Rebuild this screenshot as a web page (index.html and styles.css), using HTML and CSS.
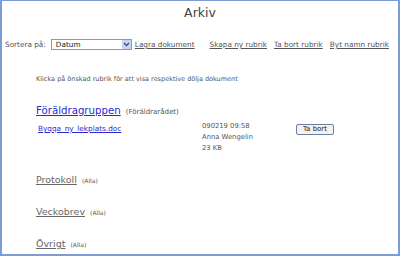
FILE: index.html
```html
<!DOCTYPE html>
<html lang="sv">
<head>
    <meta charset="UTF-8">
    <title>Arkiv</title>
    <link rel="stylesheet" href="styles.css">
</head>
<body>
    <div class="frame">
        <h1 class="title">Arkiv</h1>

        <div class="toolbar">
            <label class="sort-label">Sortera på:</label>
            <div class="select">
                <span>Datum</span>
                <span class="select-btn">
                    <svg width="7" height="5" viewBox="0 0 7 5"><path d="M1 1 L3.5 3.5 L6 1" fill="none" stroke="#3a4f8a" stroke-width="1.4"/></svg>
                </span>
            </div>
            <a href="#" class="action first">Lagra dokument</a>
            <div class="right-actions">
                <a href="#" class="action">Skapa ny rubrik</a>
                <a href="#" class="action">Ta bort rubrik</a>
                <a href="#" class="action">Byt namn rubrik</a>
            </div>
        </div>

        <div class="main">
            <p class="hint">Klicka på önskad rubrik för att visa respektive dölja dokument</p>

            <div class="group open">
                <div class="group-head">
                    <a href="#" class="group-link blue">Föräldragruppen</a>
                    <span class="group-owner">(Föräldrarådet)</span>
                </div>
                <div class="doc-row">
                    <a href="#" class="doc-link">Byqqa_ny_lekplats.doc</a>
                    <div class="doc-meta">
                        <div>090219 09:58</div>
                        <div>Anna Wengelin</div>
                        <div>23 KB</div>
                    </div>
                    <div class="doc-action"><button type="button">Ta bort</button></div>
                </div>
            </div>

            <div class="group first-closed">
                <a href="#" class="group-link">Protokoll</a>
                <span class="group-owner small">(Alla)</span>
            </div>
            <div class="group">
                <a href="#" class="group-link">Veckobrev</a>
                <span class="group-owner small">(Alla)</span>
            </div>
            <div class="group">
                <a href="#" class="group-link">Övrigt</a>
                <span class="group-owner small">(Alla)</span>
            </div>
        </div>
    </div>
</body>
</html>
```

FILE: styles.css
```css
body {
    margin: 0;
    font-family: "DejaVu Sans", Verdana, sans-serif;
    color: #555;
}

.frame {
    height: 256px;
    box-sizing: border-box;
    border: 2px solid #7d9bd4;
    border-top-width: 1px;
    background: #fff;
    overflow: hidden;
}

.title {
    margin: 4px 0 0;
    text-align: center;
    font-size: 12.5px;
    font-weight: normal;
    color: #444;
    line-height: 16px;
}

.toolbar {
    display: flex;
    align-items: center;
    padding: 18px 0 0 3px;
    font-size: 7.3px;
}

.sort-label {
    color: #555;
}

.select {
    display: flex;
    align-items: center;
    justify-content: space-between;
    width: 81px;
    height: 11px;
    margin-left: 5px;
    border: 1px solid #7f9db9;
    box-sizing: border-box;
    padding-left: 4px;
    color: #222;
}

.select-btn {
    display: flex;
    align-items: center;
    justify-content: center;
    width: 9px;
    height: 9px;
    background: #c5d5f5;
}

.action {
    color: #555;
    text-decoration: underline;
}

.action.first {
    margin-left: 3px;
}

.right-actions {
    display: flex;
    gap: 7px;
    margin-left: 15px;
}

.main {
    padding-left: 34px;
}

.hint {
    margin: 25px 0 0;
    font-size: 6.5px;
    color: #555;
}

.group {
    margin-top: 17px;
    line-height: 12px;
}

.group.open {
    margin-top: 20px;
}

.group.first-closed {
    margin-top: 18px;
}

.group-link {
    font-size: 9.5px;
    color: #666;
}

.group-link.blue {
    font-size: 10.2px;
    color: #2a2ad0;
}

.group-owner {
    font-size: 7px;
    color: #555;
}

.group-owner.small {
    font-size: 6px;
}

.doc-row {
    display: flex;
    margin-top: 5px;
    font-size: 6.8px;
}

.doc-link {
    width: 164px;
    margin-left: 2px;
    font-size: 7.3px;
    color: #2a2ad0;
}

.doc-meta {
    width: 94px;
    line-height: 11px;
    margin-top: -2px;
}

.doc-action button {
    font-family: "DejaVu Sans", Verdana, sans-serif;
    font-size: 7px;
    padding: 0 3px;
    height: 11px;
    width: 38px;
    margin-top: -3px;
    border: 1px solid #6a7fa8;
    border-radius: 2px;
    background: #f2f2f0;
    color: #222;
}
```
